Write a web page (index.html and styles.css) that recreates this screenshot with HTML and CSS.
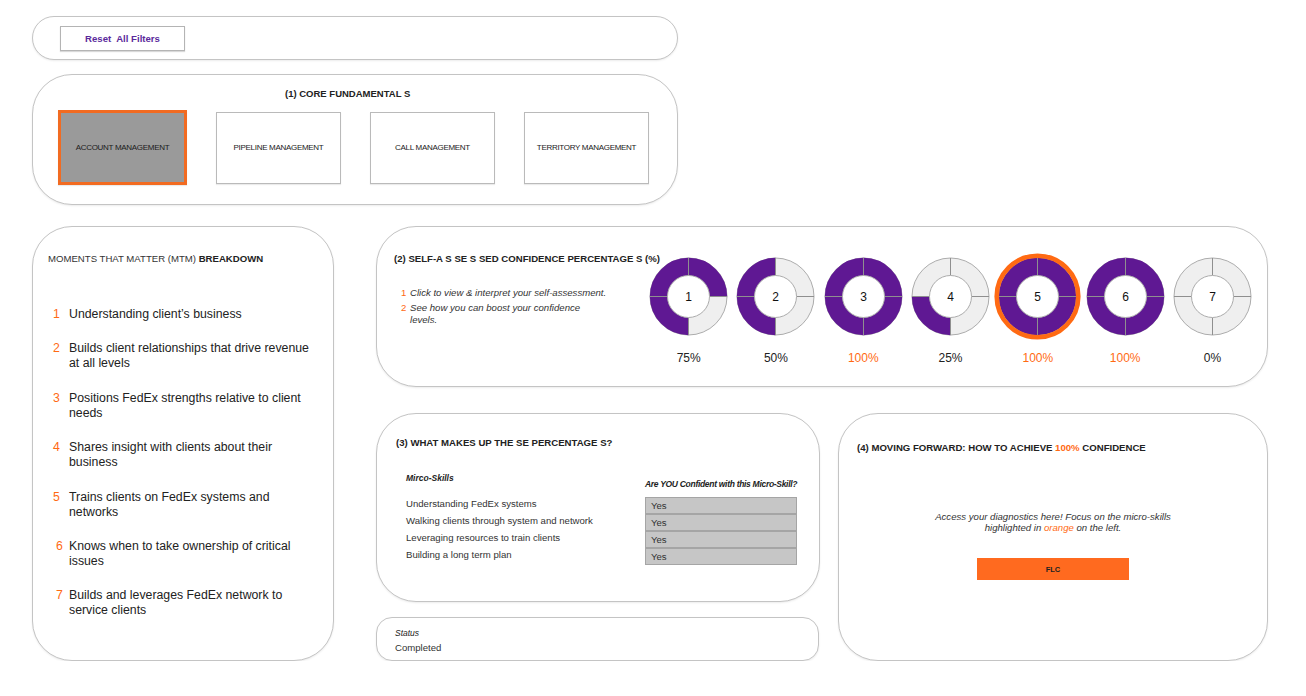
FILE: index.html
```html
<!DOCTYPE html>
<html lang="en">
<head>
<meta charset="utf-8">
<title>Confidence Dashboard</title>
<link rel="stylesheet" href="styles.css">
</head>
<body>
<div class="page">
  <div class="top">
    <div class="panel reset-panel">
      <button class="reset-btn">Reset&nbsp; All Filters</button>
    </div>
    <div class="panel core">
      <div class="core-title">(1) CORE FUNDAMENTAL S</div>
      <div class="core-row">
        <div class="fund-box active">ACCOUNT MANAGEMENT</div>
        <div class="fund-box">PIPELINE MANAGEMENT</div>
        <div class="fund-box">CALL MANAGEMENT</div>
        <div class="fund-box">TERRITORY MANAGEMENT</div>
      </div>
    </div>
  </div>

  <div class="bottom">
    <div class="panel mtm">
      <div class="mtm-title">MOMENTS THAT MATTER (MTM) <b>BREAKDOWN</b></div>
      <ul class="mtm-list">
        <li><span class="num">1</span><span>Understanding client’s business</span></li>
        <li><span class="num">2</span><span>Builds client relationships that drive revenue<br>at all levels</span></li>
        <li><span class="num">3</span><span>Positions FedEx strengths relative to client<br>needs</span></li>
        <li><span class="num">4</span><span>Shares insight with clients about their<br>business</span></li>
        <li><span class="num">5</span><span>Trains clients on FedEx systems and<br>networks</span></li>
        <li><span class="num num-in">6</span><span>Knows when to take ownership of critical<br>issues</span></li>
        <li><span class="num num-in">7</span><span>Builds and leverages FedEx network to<br>service clients</span></li>
      </ul>
    </div>

    <div class="right">
      <div class="panel conf">
        <div class="conf-left">
          <div class="conf-title">(2) SELF-A S SE S SED CONFIDENCE PERCENTAGE S (%)</div>
          <div class="steps">
            <div class="step"><span class="n">1</span><span>Click to view &amp; interpret your self-assessment.</span></div>
            <div class="step"><span class="n">2</span><span>See how you can boost your confidence<br>levels.</span></div>
          </div>
        </div>
        <div class="donuts">
          <div class="donut-cell">
            <svg class="donut" width="87" height="87" viewBox="-43.5 -43.5 87 87">
              <circle r="38.5" class="ring-bg"/>
              <circle r="29.75" class="arc" stroke-dasharray="140.19 186.92" transform="rotate(90)"/>
              <path class="div" d="M0 -38.5V-21M0 21V38.5M-38.5 0H-21M21 0H38.5"/>
              <circle r="21" class="hole"/>
              <text class="dnum" x="0" y="4.5">1</text>
            </svg>
            <div class="pct">75%</div>
          </div>
          <div class="donut-cell">
            <svg class="donut" width="87" height="87" viewBox="-43.5 -43.5 87 87">
              <circle r="38.5" class="ring-bg"/>
              <circle r="29.75" class="arc" stroke-dasharray="93.46 186.92" transform="rotate(90)"/>
              <path class="div" d="M0 -38.5V-21M0 21V38.5M-38.5 0H-21M21 0H38.5"/>
              <circle r="21" class="hole"/>
              <text class="dnum" x="0" y="4.5">2</text>
            </svg>
            <div class="pct">50%</div>
          </div>
          <div class="donut-cell">
            <svg class="donut" width="87" height="87" viewBox="-43.5 -43.5 87 87">
              <circle r="38.5" class="ring-bg"/>
              <circle r="29.75" class="arc"/>
              <path class="div" d="M0 -38.5V-21M0 21V38.5M-38.5 0H-21M21 0H38.5"/>
              <circle r="21" class="hole"/>
              <text class="dnum" x="0" y="4.5">3</text>
            </svg>
            <div class="pct hot">100%</div>
          </div>
          <div class="donut-cell">
            <svg class="donut" width="87" height="87" viewBox="-43.5 -43.5 87 87">
              <circle r="38.5" class="ring-bg"/>
              <circle r="29.75" class="arc" stroke-dasharray="46.73 186.92" transform="rotate(90)"/>
              <path class="div" d="M0 -38.5V-21M0 21V38.5M-38.5 0H-21M21 0H38.5"/>
              <circle r="21" class="hole"/>
              <text class="dnum" x="0" y="4.5">4</text>
            </svg>
            <div class="pct">25%</div>
          </div>
          <div class="donut-cell">
            <svg class="donut" width="87" height="87" viewBox="-43.5 -43.5 87 87">
              <circle r="38.5" class="ring-bg"/>
              <circle r="29.75" class="arc"/>
              <path class="div" d="M0 -38.5V-21M0 21V38.5M-38.5 0H-21M21 0H38.5"/>
              <circle r="21" class="hole"/>
              <circle r="40.8" class="sel"/>
              <text class="dnum" x="0" y="4.5">5</text>
            </svg>
            <div class="pct hot">100%</div>
          </div>
          <div class="donut-cell">
            <svg class="donut" width="87" height="87" viewBox="-43.5 -43.5 87 87">
              <circle r="38.5" class="ring-bg"/>
              <circle r="29.75" class="arc"/>
              <path class="div" d="M0 -38.5V-21M0 21V38.5M-38.5 0H-21M21 0H38.5"/>
              <circle r="21" class="hole"/>
              <text class="dnum" x="0" y="4.5">6</text>
            </svg>
            <div class="pct hot">100%</div>
          </div>
          <div class="donut-cell">
            <svg class="donut" width="87" height="87" viewBox="-43.5 -43.5 87 87">
              <circle r="38.5" class="ring-bg"/>
              <path class="div" d="M0 -38.5V-21M0 21V38.5M-38.5 0H-21M21 0H38.5"/>
              <circle r="21" class="hole"/>
              <text class="dnum" x="0" y="4.5">7</text>
            </svg>
            <div class="pct">0%</div>
          </div>
        </div>
      </div>

      <div class="lower">
        <div class="lower-left">
          <div class="panel makeup">
            <div class="sec-title">(3) WHAT MAKES UP THE SE PERCENTAGE S?</div>
            <div class="skills">
              <div class="hdr hdr-left">Mirco-Skills</div>
              <div class="hdr hdr-right">Are YOU Confident with this Micro-Skill?</div>
              <div class="skill">Understanding FedEx systems</div>
              <div class="yes">Yes</div>
              <div class="skill">Walking clients through system and network</div>
              <div class="yes">Yes</div>
              <div class="skill">Leveraging resources to train clients</div>
              <div class="yes">Yes</div>
              <div class="skill">Building a long term plan</div>
              <div class="yes">Yes</div>
            </div>
          </div>
          <div class="panel status">
            <div class="status-label">Status</div>
            <div class="status-value">Completed</div>
          </div>
        </div>

        <div class="panel forward">
          <div class="sec-title">(4) MOVING FORWARD: HOW TO ACHIEVE <span class="hot">100%</span> CONFIDENCE</div>
          <p class="fwd-text">Access your diagnostics here! Focus on the micro-skills<br>highlighted in <span class="hot">orange</span> on the left.</p>
          <button class="flc">FLC</button>
        </div>
      </div>
    </div>
  </div>
</div>
</body>
</html>
```

FILE: styles.css
```css
* { box-sizing: border-box; }

body {
  margin: 0;
  background: #ffffff;
  color: #222222;
  font-family: "Liberation Sans", Arial, sans-serif;
}

.page {
  padding: 16px 0 0 32px;
  width: 1270px;
}

.panel {
  background: #ffffff;
  border: 1px solid #c4c4c4;
  box-shadow: 0 1px 2px rgba(0, 0, 0, 0.08);
}

.hot { color: #ff6a13; }

/* top */
.top { width: 646px; }

.reset-panel {
  height: 44px;
  border-radius: 22px;
  display: flex;
  align-items: center;
  padding-left: 27px;
}

.reset-btn {
  width: 125px;
  height: 25px;
  margin-top: 1px;
  background: #ffffff;
  border: 1px solid #b4b4b4;
  box-shadow: 0 1px 1px rgba(0, 0, 0, 0.15);
  color: #5b2a9c;
  font-family: "Liberation Sans", Arial, sans-serif;
  font-weight: bold;
  font-size: 9.6px;
  padding: 0;
}

.core {
  margin-top: 14px;
  height: 131px;
  border-radius: 40px;
  padding: 13px 0 0 25px;
}

.core-title {
  font-size: 9.5px;
  line-height: 12px;
  font-weight: bold;
  padding-left: 227px;
  white-space: nowrap;
}

.core-row {
  display: flex;
  align-items: center;
  gap: 29px;
  height: 75px;
  margin-top: 10px;
}

.fund-box {
  width: 125px;
  height: 72px;
  border: 1px solid #bababa;
  box-shadow: 0 1px 1px rgba(0, 0, 0, 0.08);
  display: flex;
  align-items: center;
  justify-content: center;
  font-size: 8px;
  letter-spacing: -0.3px;
  color: #1a1a1a;
  white-space: nowrap;
}

.fund-box.active {
  width: 129px;
  height: 75px;
  border: 3px solid #f26b21;
  background: #9a9a9a;
}

/* bottom */
.bottom {
  display: flex;
  gap: 42px;
  margin-top: 21px;
}

.mtm {
  width: 302px;
  height: 435px;
  border-radius: 40px;
  padding: 26px 0 0 15px;
}

.mtm-title {
  font-size: 9.6px;
  line-height: 12px;
  white-space: nowrap;
  color: #333333;
}

.mtm-title b { color: #222222; }

.mtm-list {
  list-style: none;
  margin: 42px 0 0;
  padding: 0 0 0 5px;
}

.mtm-list li {
  display: flex;
  font-size: 12.3px;
  line-height: 15px;
  margin-bottom: 19.4px;
  white-space: nowrap;
}

.num {
  width: 16px;
  flex-shrink: 0;
  color: #ff6a13;
}

.num-in { padding-left: 3px; }

.right { width: 892px; }

.conf {
  height: 161px;
  border-radius: 40px;
  padding: 26px 0 0 17px;
  display: flex;
}

.conf-left {
  width: 251px;
  flex-shrink: 0;
}

.conf-title, .sec-title {
  font-size: 9.6px;
  line-height: 12px;
  font-weight: bold;
  white-space: nowrap;
}

.steps {
  margin-top: 22px;
  padding-left: 7px;
}

.step {
  display: flex;
  font-size: 9.6px;
  line-height: 12px;
  margin-bottom: 3px;
  font-style: italic;
  white-space: nowrap;
  color: #333333;
}

.step .n {
  width: 9px;
  flex-shrink: 0;
  font-style: normal;
  color: #ff6a13;
}

.donuts { display: flex; }

.donut-cell {
  width: 87.3px;
  display: flex;
  flex-direction: column;
  align-items: center;
}

.donut { display: block; }

.ring-bg { fill: #efefef; stroke: #acacac; stroke-width: 1; }
.arc { fill: none; stroke: #5f1893; stroke-width: 17.8; }
.div { stroke: #8f8f8f; stroke-width: 1; fill: none; }
.hole { fill: #ffffff; stroke: #acacac; stroke-width: 1; }
.sel { fill: none; stroke: #ff6a13; stroke-width: 4.6; }

.dnum {
  font-family: "Liberation Sans", Arial, sans-serif;
  font-size: 12px;
  fill: #111111;
  text-anchor: middle;
}

.pct {
  margin-top: 11px;
  font-size: 12px;
  line-height: 14px;
}

.lower {
  display: flex;
  margin-top: 26px;
}

.lower-left { width: 444px; }

.makeup {
  height: 189px;
  border-radius: 40px;
  padding: 23px 0 0 19px;
}

.skills {
  display: grid;
  grid-template-columns: 239px 152px;
  margin: 23px 0 0 10px;
}

.hdr {
  height: 18px;
  margin-bottom: 7px;
  font-size: 8.5px;
  line-height: 12px;
  font-style: italic;
  font-weight: bold;
  white-space: nowrap;
  color: #222222;
  display: flex;
}

.hdr-left { align-items: flex-start; }
.hdr-right { align-items: flex-end; letter-spacing: -0.3px; }

.skill {
  height: 17px;
  font-size: 9.6px;
  line-height: 13px;
  white-space: nowrap;
  color: #333333;
}

.yes {
  height: 17px;
  background: #c6c6c6;
  border: 1px solid #a5a5a5;
  font-size: 9.6px;
  line-height: 15px;
  padding-left: 5px;
  color: #333333;
}

.status {
  margin-top: 15px;
  width: 443px;
  height: 44px;
  border-radius: 16px;
  padding: 9px 0 0 18px;
}

.status-label {
  font-size: 8.5px;
  line-height: 12px;
  font-style: italic;
}

.status-value {
  font-size: 9.6px;
  line-height: 17px;
  color: #333333;
}

.forward {
  margin-left: 18px;
  width: 430px;
  height: 248px;
  border-radius: 40px;
  padding: 28px 18px 0;
}

.fwd-text {
  margin: 57px 0 0;
  text-align: center;
  font-size: 9.6px;
  line-height: 11px;
  font-style: italic;
  color: #333333;
}

.flc {
  display: block;
  width: 152px;
  height: 22px;
  margin: 25px auto 0;
  background: #ff6a1f;
  border: none;
  padding: 0;
  font-family: "Liberation Sans", Arial, sans-serif;
  font-weight: bold;
  font-size: 7.5px;
  color: #222222;
}
```
